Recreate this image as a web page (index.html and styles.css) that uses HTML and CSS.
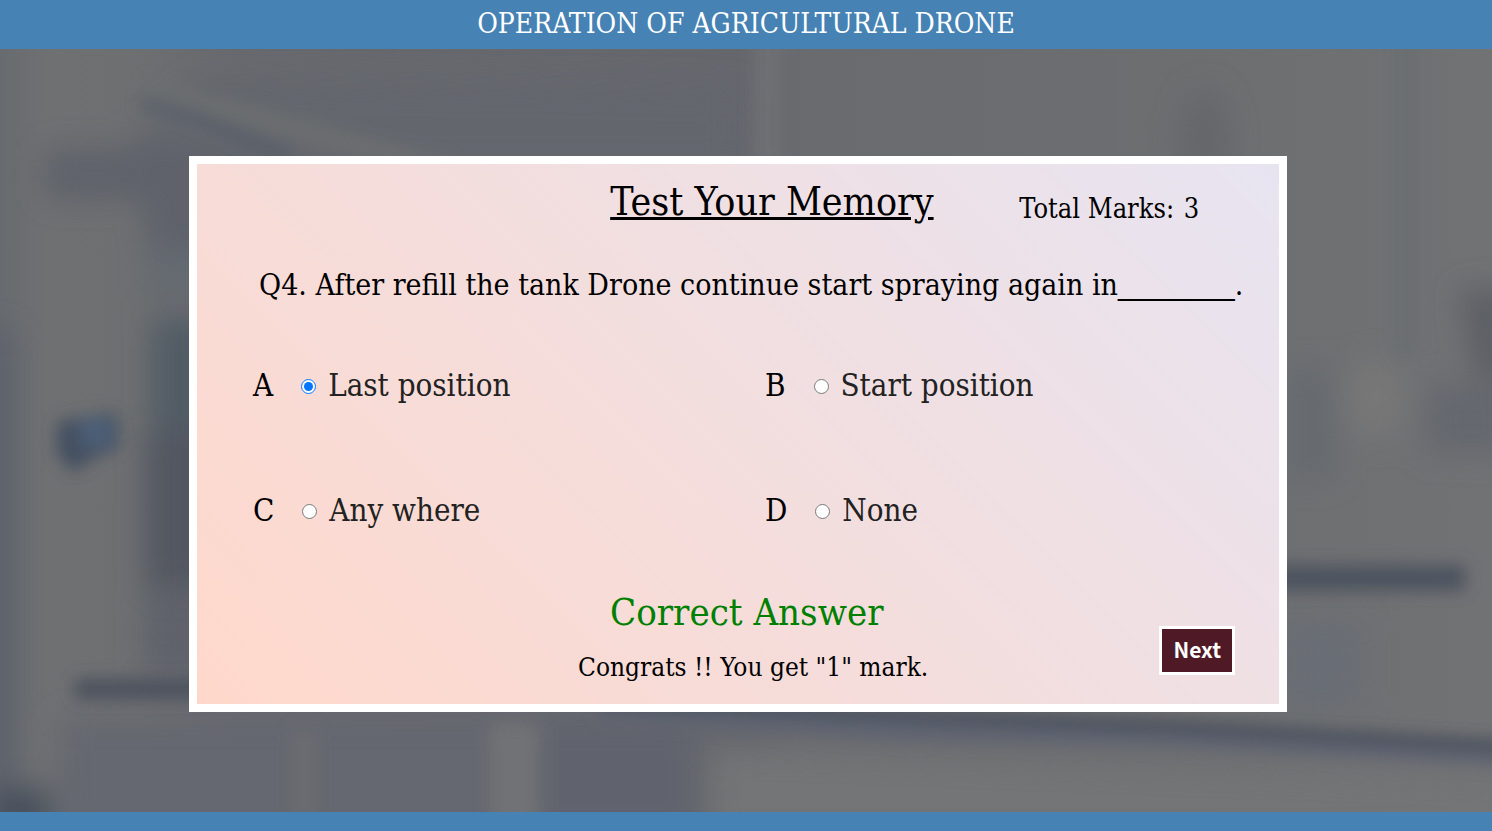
FILE: index.html
```html
<!DOCTYPE html>
<html lang="en">
<head>
<meta charset="utf-8">
<meta name="viewport" content="width=device-width, initial-scale=1">
<title>Operation of Agricultural Drone</title>
<link rel="stylesheet" href="styles.css">
</head>
<body>
<header class="topbar"><h1 class="topbar-title">OPERATION OF AGRICULTURAL DRONE</h1></header>
<main class="stage">
  <svg class="backdrop" viewBox="0 0 1492 763" preserveAspectRatio="none" aria-hidden="true">
    <defs>
      <linearGradient id="room" x1="0" y1="0" x2="1" y2="0">
        <stop offset="0" stop-color="#686b6f"/>
        <stop offset="0.03" stop-color="#6e7072"/>
        <stop offset="0.09" stop-color="#6d6f71"/>
        <stop offset="0.16" stop-color="#67696e"/>
        <stop offset="0.5" stop-color="#65676d"/>
        <stop offset="0.54" stop-color="#6a6b6f"/>
        <stop offset="0.8" stop-color="#6c6e70"/>
        <stop offset="1" stop-color="#717274"/>
      </linearGradient>
      <filter id="soft" x="-10%" y="-10%" width="120%" height="120%"><feGaussianBlur stdDeviation="15"/></filter>
      <filter id="fine" x="-10%" y="-10%" width="120%" height="120%"><feGaussianBlur stdDeviation="8"/></filter>
    </defs>
    <rect width="1492" height="763" fill="url(#room)"/>
    <g filter="url(#soft)">
      <path d="M200 30 L740 40 V120 H420 L150 75Z" fill="#63666d"/>
      <path d="M135 80 L290 115 L320 210 H150Z" fill="#5e626b"/>
      <rect x="45" y="100" width="125" height="50" fill="#5f626b"/>
      <rect x="150" y="200" width="60" height="50" fill="#656a71"/>
      <path d="M-20 280 H12 V763 H-20Z" fill="#5b606a"/>
      <rect x="152" y="270" width="70" height="120" fill="#515c65"/>
      <rect x="145" y="385" width="80" height="155" fill="#535761"/>
      <rect x="145" y="545" width="80" height="80" fill="#5f626b"/>
      <path d="M60 670 H700 V790 H60Z" fill="#656870"/>
      <path d="M-10 740 H50 V790 H-10Z" fill="#474f5c"/>
      <rect x="545" y="670" width="150" height="120" fill="#60646d"/>
      <path d="M710 700 L1520 730 V790 H710Z" fill="#737476"/>
      <path d="M1460 240 H1510 V330 H1475Z" fill="#5c5f65"/>
      <rect x="1285" y="320" width="50" height="110" fill="#666a70"/>
      <ellipse cx="1375" cy="350" rx="32" ry="40" fill="#777777"/>
      <rect x="1425" y="335" width="90" height="70" fill="#65686e"/>
      <rect x="1285" y="570" width="75" height="90" fill="#696d75"/>
      <ellipse cx="1205" cy="90" rx="24" ry="50" fill="#65666b"/>
    </g>
    <g filter="url(#fine)">
      <path d="M145 40 L240 64 L450 122" fill="none" stroke="#6c6e70" stroke-width="20"/>
      <path d="M140 54 L190 66 L290 108" fill="none" stroke="#565d69" stroke-width="11"/>
      <rect x="755" y="-30" width="26" height="150" fill="#6e6f73"/>
      <rect x="1394" y="-30" width="24" height="340" fill="#6a6e71"/>
      <path d="M58 372 L116 364 L120 398 L92 410 L72 424 L56 402Z" fill="#445060"/>
      <rect x="80" y="370" width="32" height="28" fill="#4c5e77"/>
      <path d="M75 640 H210" fill="none" stroke="#4b515d" stroke-width="20"/>
      <rect x="1270" y="516" width="195" height="26" fill="#4d525e"/>
      <path d="M600 660 L900 680 L1160 686 L1510 706" fill="none" stroke="#5f6471" stroke-width="22"/>
      <path d="M600 652 L900 666 L1160 677 L1510 697" fill="none" stroke="#424957" stroke-width="10"/>
      <rect x="490" y="675" width="48" height="115" fill="#717275"/>
      <rect x="292" y="680" width="24" height="110" fill="#6a6c70"/>
    </g>
  </svg>
  <form class="card">
    <div class="card-head">
      <h2 class="card-title">Test Your Memory</h2>
      <p class="marks">Total Marks: <span class="score">3</span></p>
    </div>
    <p class="question" id="question">Q4. After refill the tank Drone continue start spraying again in<span class="blank">_______</span>.</p>
    <div class="options" role="radiogroup" aria-labelledby="question">
      <div class="option"><span class="letter">A</span><input class="radio" type="radio" name="answer" id="a" checked><label class="choice" for="a">Last position</label></div>
      <div class="option"><span class="letter">B</span><input class="radio" type="radio" name="answer" id="b"><label class="choice" for="b">Start position</label></div>
      <div class="option"><span class="letter">C</span><input class="radio" type="radio" name="answer" id="c"><label class="choice" for="c">Any where</label></div>
      <div class="option"><span class="letter">D</span><input class="radio" type="radio" name="answer" id="d"><label class="choice" for="d">None</label></div>
    </div>
    <div class="card-foot">
      <div class="result">
        <p class="verdict">Correct Answer</p>
        <p class="congrats">Congrats !! You get "1" mark.</p>
      </div>
      <button class="next" type="button">Next</button>
    </div>
  </form>
</main>
<footer class="bottombar"></footer>
</body>
</html>
```
FILE: styles.css
```css
* { box-sizing: border-box; }
body {
  margin: 0;
  min-height: 100vh;
  display: flex;
  flex-direction: column;
  color: #000;
  font-family: "Roboto Slab", "DejaVu Serif Condensed", "DejaVu Serif", serif;
}
h1, h2, p { margin: 0; font-weight: 400; }
.topbar {
  padding: 4px 16px 5px;
  background: #4682b4;
  color: #fff;
  text-align: center;
}
.topbar-title { font-size: 28px; line-height: 40px; font-weight: 500; }
.stage {
  position: relative;
  flex: 1;
  display: flex;
  align-items: center;
  justify-content: center;
  padding: 23px 16px 16px 0;
  overflow: hidden;
}
.backdrop { position: absolute; inset: 0; width: 100%; height: 100%; }
.card {
  position: relative;
  width: 75%;
  max-width: 1098px;
  padding: 14px 0 10px;
  border: 8px solid #fff;
  background: linear-gradient(45deg, #ffd8cb, #e7e4f1);
}
.card-head {
  display: grid;
  grid-template-columns: 38% 38% 24%;
  align-items: start;
}
.card-title {
  grid-column: 2;
  padding-left: 2px;
  font-size: 39px;
  line-height: 48px;
  text-decoration: underline;
  white-space: nowrap;
}
.marks { font-size: 27px; line-height: 36px; padding-top: 13px; }
.score { padding-left: 2px; }
.question { padding: 38px 0 0 62px; font-size: 30px; line-height: 40px; }
.blank { font-family: "Liberation Sans", sans-serif; }
.options {
  display: grid;
  grid-template-columns: 512px 1fr;
  padding: 60px 0 0 56px;
  row-gap: 85px;
}
.option { display: flex; align-items: center; font-size: 31px; line-height: 40px; }
.letter { min-width: 20px; margin-right: 28px; font-weight: 500; }
.radio { width: 15px; height: 15px; margin: 3px 12px 0 0; }
.choice { font-weight: 300; color: #222; }
.card-foot {
  display: flex;
  align-items: center;
  justify-content: space-between;
  padding: 54px 44px 0 381px;
}
.verdict { padding-left: 32px; font-size: 38px; line-height: 56px; color: #008000; }
.congrats { font-size: 26px; line-height: 54px; }
.next {
  margin-top: 22px;
  padding: 5px 11px 7px;
  border: 3px solid #fff;
  background: #501926;
  color: #fff;
  font: 700 21px/31px "Noto Sans CJK JP", "Noto Sans", sans-serif;
}
.bottombar { height: 19px; background: #4682b4; }
```
